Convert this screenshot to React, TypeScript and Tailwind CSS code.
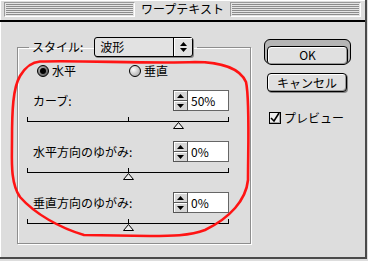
import React from 'react';

const jp = { fontFamily: '"Noto Sans CJK JP", "Noto Sans", sans-serif' };

const Stripes: React.FC = () => (
  <div className="flex-1 h-[15px] border border-t-[#9a9a9a] border-l-[#9a9a9a] border-b-white border-r-white bg-[#e4e4e4] flex flex-col justify-center gap-[1px] px-px">
    {[0, 1, 2, 3, 4, 5].map((i) => (
      <div key={i} className="h-px bg-[#8c8c8c]" />
    ))}
  </div>
);

const Spinner: React.FC<{ value: string }> = ({ value }) => (
  <div className="flex h-[21px]">
    <div className="w-[15px] flex flex-col border border-[#555] bg-[#555] gap-px">
      <div className="flex-1 bg-[#d6d6d6] shadow-[inset_1px_1px_0_#fff] flex items-center justify-center">
        <svg width="7" height="4" viewBox="0 0 7 4"><path d="M3.5 0L7 4H0Z" fill="#000" /></svg>
      </div>
      <div className="flex-1 bg-[#d6d6d6] shadow-[inset_1px_1px_0_#fff] flex items-center justify-center">
        <svg width="7" height="4" viewBox="0 0 7 4"><path d="M0 0H7L3.5 4Z" fill="#000" /></svg>
      </div>
    </div>
    <div className="w-[41px] bg-white border border-[#666] border-l-0 pl-[3px] text-[12px] leading-[19px] text-black" style={jp}>
      {value}
    </div>
  </div>
);

const Slider: React.FC<{ value: number }> = ({ value }) => {
  const left = Math.round(((value + 100) / 200) * 201);
  return (
    <div className="relative w-[202px] h-[5px] border-l border-r border-b border-black">
      <div className="absolute left-[100px] top-0 w-px h-[4px] bg-black" />
      <svg className="absolute top-[5px]" style={{ left: left - 6 }} width="11" height="7" viewBox="0 0 11 7">
        <path d="M5.5 0.5L10.5 6.5H0.5Z" fill="#eeeeee" stroke="#000" strokeWidth="1" />
      </svg>
    </div>
  );
};

const Section: React.FC<{ label: string; value: string; pos: number; className?: string }> = ({ label, value, pos, className }) => (
  <div className={`flex flex-col ${className ?? ''}`}>
    <div className="flex items-center justify-between h-[21px] w-[202px]">
      <span className="pl-[6px] text-[12px] text-black" style={jp}>{label}</span>
      <Spinner value={value} />
    </div>
    <div className="mt-[6px]">
      <Slider value={pos} />
    </div>
  </div>
);

const Radio: React.FC<{ checked?: boolean; label: string }> = ({ checked, label }) => (
  <div className="flex items-center gap-[3px]">
    {checked ? (
      <div className="w-[12px] h-[12px] rounded-full border border-black bg-[radial-gradient(circle_at_35%_35%,#bbb,#444)] flex items-center justify-center">
        <div className="w-[6px] h-[6px] rounded-full bg-black" />
      </div>
    ) : (
      <div className="w-[12px] h-[12px] rounded-full border border-black bg-[radial-gradient(circle_at_35%_35%,#fff,#999)]" />
    )}
    <span className="text-[12px] leading-[13px] text-black" style={jp}>{label}</span>
  </div>
);

export default function App() {
  return (
    <div className="relative w-[368px] h-[261px] bg-[#dddddd] overflow-hidden">
      <div className="w-[367px] h-[259px] flex flex-col border-r-2 border-b-2 border-[#4a4a4a] bg-[#dddddd]">
        {/* title bar */}
        <div className="h-[22px] flex items-center px-[4px] pb-[2px] border-b-2 border-black bg-[#dddddd] shadow-[inset_1px_1px_0_#fff]">
          <Stripes />
          <span className="px-[6px] text-[12px] leading-[14px] text-black" style={jp}>ワープテキスト</span>
          <Stripes />
        </div>

        {/* body */}
        <div className="flex-1 flex pl-[16px] pt-[15px] border-l border-white">
          <fieldset className="w-[234px] h-[207px] border border-[#8e8e8e] shadow-[1px_1px_0_#fff,inset_1px_1px_0_#fff] px-0 pb-0 m-0">
            <legend className="ml-[11px] px-0">
              <div className="flex items-center h-[20px]">
                <span className="pl-[3px] pr-[11px] text-[12px] text-black" style={jp}>スタイル:</span>
                <div className="flex w-[99px] h-[20px] rounded-[3px] border border-black bg-[#e2e2e2] shadow-[1px_1px_0_#888]">
                  <span className="flex-1 pl-[5px] text-[12px] leading-[18px] text-black" style={jp}>波形</span>
                  <div className="w-[19px] border-l border-black flex flex-col items-center justify-center gap-[2px] shadow-[inset_1px_1px_0_#fff]">
                    <svg width="7" height="4" viewBox="0 0 7 4"><path d="M3.5 0L7 4H0Z" fill="#000" /></svg>
                    <svg width="7" height="4" viewBox="0 0 7 4"><path d="M0 0H7L3.5 4Z" fill="#000" /></svg>
                  </div>
                </div>
                <div className="w-[4px]" />
              </div>
            </legend>
            <div className="flex flex-col pl-[9px] pt-[7px]">
              <div className="flex items-center h-[13px] pl-[10px] gap-[53px]">
                <Radio checked label="水平" />
                <Radio label="垂直" />
              </div>
              <Section className="mt-[13px]" label="カーブ:" value="50%" pos={50} />
              <Section className="mt-[19px]" label="水平方向のゆがみ:" value="0%" pos={0} />
              <Section className="mt-[19px]" label="垂直方向のゆがみ:" value="0%" pos={0} />
            </div>
          </fieldset>

          <div className="flex flex-col ml-[13px] pt-[2px]">
            <div className="w-[87px] h-[25px] rounded-[6px] border border-black bg-[#b5b5b5] p-[2px]">
              <button className="w-full h-full rounded-[4px] border border-black bg-[#e0e0e0] shadow-[inset_1px_1px_0_#fff,inset_-1px_-1px_0_#999] text-[12px] leading-[16px] text-black" style={jp}>
                OK
              </button>
            </div>
            <button className="ml-[3px] mt-[9px] w-[80px] h-[19px] rounded-[4px] border border-black bg-[#e0e0e0] shadow-[inset_1px_1px_0_#fff,inset_-1px_-1px_0_#999,1px_1px_0_#888] text-[12px] leading-[16px] text-black" style={jp}>
              キャンセル
            </button>
            <div className="ml-[5px] mt-[19px] flex items-center gap-[3px]">
              <div className="w-[12px] h-[12px] border border-black bg-[#eeeeee] shadow-[inset_-1px_-1px_0_#aaa]">
                <svg width="10" height="10" viewBox="0 0 10 10">
                  <path d="M1 5L4 8L9 0" fill="none" stroke="#000" strokeWidth="1.6" />
                </svg>
              </div>
              <span className="text-[12px] leading-[13px] text-black" style={jp}>プレビュー</span>
            </div>
          </div>
        </div>
      </div>

      {/* red hand-drawn annotation */}
      <svg className="absolute left-0 top-0 pointer-events-none" width="368" height="261" viewBox="0 0 368 261">
        <path
          d="M40 61.5 C80 60, 150 64, 195 62 C220 62, 240 68, 246 82 C250 100, 248 150, 248 180 C246 200, 230 218, 205 230 C190 236, 170 236, 150 236 L84 235 C60 228, 35 214, 20 197 C10 182, 12 160, 12 140 C12 110, 13 88, 20 76 C26 66, 32 62, 40 61.5 Z"
          fill="none"
          stroke="#ff1414"
          strokeWidth="2.6"
          strokeLinejoin="round"
        />
      </svg>
    </div>
  );
}
